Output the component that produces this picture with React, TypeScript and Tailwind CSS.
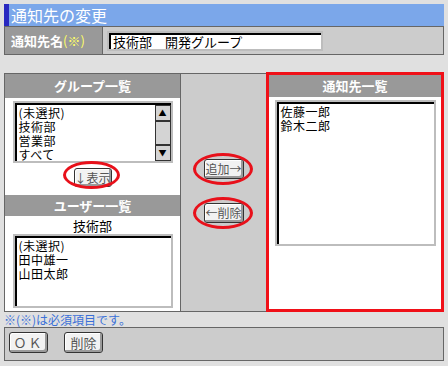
const font = { fontFamily: '"Noto Sans CJK JP", "DejaVu Sans", sans-serif' };

function ListBox({
  items,
  className,
  scroll,
}: {
  items: string[];
  className: string;
  scroll?: boolean;
}) {
  return (
    <div className={`border-2 border-[#bdbdbd] bg-white ${className}`}>
      <div className="flex h-full border-t-2 border-l-2 border-black">
        <div className="flex-1 pl-[2px] pt-[1px] text-[12px] leading-[14px] tracking-[0.5px] text-black">
          {items.map((t) => (
            <div key={t} className="h-[14px] whitespace-nowrap">
              {t}
            </div>
          ))}
        </div>
        {scroll && (
          <div className="flex w-[16px] flex-col bg-[#e8e8e8]">
            <div className="flex h-[16px] items-center justify-center border border-[#333] bg-[#d4d4d4] text-[8px] leading-none">
              ▲
            </div>
            <div className="h-[24px] border border-[#333] bg-[#d4d4d4]" />
            <div className="flex-1 bg-[repeating-linear-gradient(45deg,#c8c8c8_0_1px,#f0f0f0_1px_2px)]" />
            <div className="flex h-[16px] items-center justify-center border border-[#333] bg-[#d4d4d4] text-[8px] leading-none">
              ▼
            </div>
          </div>
        )}
      </div>
    </div>
  );
}

function Btn({ label, className }: { label: string; className: string }) {
  return (
    <button
      className={`flex items-center justify-center whitespace-nowrap rounded-[3px] border border-[#333] bg-[#f2f2f2] p-0 leading-none text-[#555] shadow-[inset_-2px_-2px_0_#9a9a9a,inset_1px_1px_0_#fff] ${className}`}
    >
      {label}
    </button>
  );
}

function Ring({ className }: { className: string }) {
  return (
    <div
      className={`pointer-events-none absolute rounded-[50%] border-[3px] border-[#e8101a] ${className}`}
    />
  );
}

export default function App() {
  return (
    <div className="h-[366px] w-[448px] bg-[#e0e0e0] px-[4px] pt-[4px]" style={font}>
      {/* title */}
      <div className="flex h-[22px] w-[440px] items-center border-l-[5px] border-[#2828c0] bg-[#7ba7ea] pl-[2px] text-[16px] text-white">
        通知先の変更
      </div>

      {/* name row */}
      <div className="flex h-[29px] w-[440px] border border-[#666]">
        <div className="flex w-[97px] items-center bg-[#999] pl-[6px] text-[13px] font-bold text-white">
          通知先名<span className="font-normal text-[#ffff66]">(※)</span>
        </div>
        <div className="flex flex-1 items-center border-l border-[#666] bg-[#ccc] pl-[4px]">
          <div className="flex h-[20px] w-[216px] items-center border-2 border-[#bdbdbd] bg-white">
            <div className="flex h-full w-full items-center border-t-2 border-l-2 border-black pl-[2px] text-[13px] text-black">
              技術部　開発グループ
            </div>
          </div>
        </div>
      </div>

      {/* main */}
      <div className="mt-[18px] flex h-[239px] w-[440px]">
        <div className="flex w-[177px] flex-col border border-[#666] bg-white">
          <div className="flex h-[24px] items-center justify-center bg-[#999] text-[13px] font-bold text-white">
            グループ一覧
          </div>
          <div className="relative flex h-[97px] flex-col items-center pt-[3px]">
            <ListBox
              items={['(未選択)', '技術部', '営業部', 'すべて']}
              className="h-[62px] w-[160px]"
              scroll
            />
            <Btn label="↓表示" className="mt-[5px] h-[19px] w-[38px] text-[12px]" />
            <Ring className="left-[58px] top-[63px] h-[28px] w-[57px]" />
          </div>
          <div className="flex h-[21px] items-center justify-center bg-[#999] text-[13px] font-bold text-white">
            ユーザー一覧
          </div>
          <div className="flex flex-1 flex-col items-center">
            <div className="pt-[2px] text-[13px] leading-[15px] text-black">技術部</div>
            <ListBox
              items={['(未選択)', '田中雄一', '山田太郎']}
              className="mt-[1px] h-[74px] w-[160px]"
            />
          </div>
        </div>

        <div className="relative flex w-[85px] flex-col items-center border-y border-[#666] bg-[#ccc] pt-[85px]">
          <Btn label="追加→" className="h-[20px] w-[40px] text-[12px]" />
          <Btn label="←削除" className="mt-[24px] h-[20px] w-[40px] text-[12px]" />
          <Ring className="left-[12px] top-[79px] h-[32px] w-[60px]" />
          <Ring className="left-[12px] top-[123px] h-[32px] w-[60px]" />
        </div>

        <div className="-mt-[1px] flex h-[240px] w-[178px] flex-col border-[3px] border-[#f01018] bg-white">
          <div className="flex h-[22px] items-center justify-center bg-[#999] text-[13px] font-bold text-white">
            通知先一覧
          </div>
          <div className="flex justify-center pt-[3px]">
            <ListBox items={['佐藤一郎', '鈴木二郎']} className="h-[146px] w-[161px]" />
          </div>
        </div>
      </div>

      <div className="h-[15px] text-[12px] leading-[15px] text-[#3a70d8]">
        ※(※)は必須項目です。
      </div>

      {/* footer */}
      <div className="flex h-[34px] w-[440px] items-start gap-[16px] border border-[#666] bg-[#ccc] pl-[4px] pt-[4px]">
        <Btn label="ＯＫ" className="h-[21px] w-[39px] tracking-[2px] text-[13px]" />
        <Btn label="削除" className="h-[21px] w-[39px] text-[13px]" />
      </div>
    </div>
  );
}
